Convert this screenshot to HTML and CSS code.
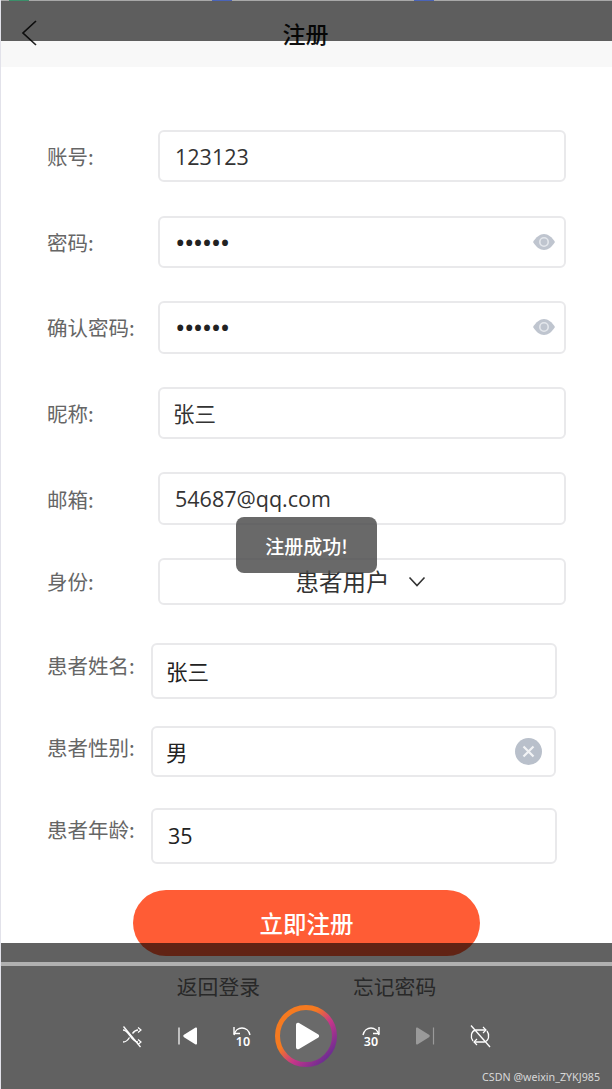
FILE: index.html
```html
<!DOCTYPE html>
<html lang="zh">
<head>
<meta charset="utf-8">
<title>注册</title>
<link rel="stylesheet" href="styles.css">
</head>
<body>
<div class="page">
  <header class="header">
    <svg class="back" width="16" height="26" viewBox="0 0 16 26"><path d="M15 1 2 13l13 12" fill="none" stroke="#222" stroke-width="1.7"/></svg>
    <h1 class="title">注册</h1>
  </header>
  <main class="form">
    <div class="row"><span class="label">账号:</span><div class="field">123123</div></div>
    <div class="row"><span class="label">密码:</span><div class="field"><span class="dots">••••••</span>
      <svg class="eye" width="24" height="18" viewBox="0 0 24 18"><path d="M1 9C4 4 8 1 12 1s8 3 11 8c-3 5-7 8-11 8S4 14 1 9z" fill="#bfc5cf"/><circle cx="12" cy="9" r="4.2" fill="none" stroke="#e4e7ec" stroke-width="1.6"/></svg></div></div>
    <div class="row"><span class="label">确认密码:</span><div class="field"><span class="dots">••••••</span>
      <svg class="eye" width="24" height="18" viewBox="0 0 24 18"><path d="M1 9C4 4 8 1 12 1s8 3 11 8c-3 5-7 8-11 8S4 14 1 9z" fill="#bfc5cf"/><circle cx="12" cy="9" r="4.2" fill="none" stroke="#e4e7ec" stroke-width="1.6"/></svg></div></div>
    <div class="row"><span class="label">昵称:</span><div class="field"><span class="cjk">张三</span></div></div>
    <div class="row"><span class="label">邮箱:</span><div class="field">54687@qq.com</div></div>
    <div class="row row-select"><span class="label">身份:</span><div class="field select"><span>患者用户</span>
      <svg class="chev" width="18" height="12" viewBox="0 0 18 12"><path d="M1.500 1.500 9 9.500l7.500-8" fill="none" stroke="#333" stroke-width="1.600"/></svg></div></div>
    <div class="row row-patient row-name"><span class="label">患者姓名:</span><div class="field"><span class="cjk">张三</span></div></div>
    <div class="row row-patient row-gender"><span class="label">患者性别:</span><div class="field field-gender"><span class="cjk">男</span>
      <svg class="clear" width="27" height="27" viewBox="0 0 27 27"><circle cx="13.500" cy="13.500" r="13.500" fill="#b9c0cb"/><path d="m8.500 8.500 10 10m0-10-10 10" stroke="#f2f3f5" stroke-width="2.200"/></svg></div></div>
    <div class="row row-patient row-age"><span class="label">患者年龄:</span><div class="field">35</div></div>
    <button class="submit">立即注册</button>
    <nav class="links"><span>返回登录</span><span>忘记密码</span></nav>
  </main>

  <div class="toast">注册成功!</div>

  <div class="shade-top">
    <i class="tab tab-g"></i><i class="tab tab-b1"></i><i class="tab tab-b2"></i>
  </div>

  <div class="shade-bottom">
    <div class="progress"></div>
    <div class="player">
      <svg class="ico" width="24" height="24" viewBox="0 0 24 24" fill="none" stroke="#fff" stroke-width="1.300"><path d="M3 6c6 0 8 12 15 12M3 18c3 0 5-2 6.500-4.500M12.500 9.500C14 7.500 16 6 18 6"/><path d="m18 3.500 3 2.500-3 2.500M18 15.500l3 2.500-3 2.500" stroke-width="1.200"/><path d="M3.500 2.500 20.500 23"/></svg>
      <svg class="ico" width="22" height="24" viewBox="0 0 22 24"><path d="M2 3.500v17" stroke="#fff" stroke-width="1.200"/><path d="M20 4.500c0-1-1-1.300-1.800-.8L7 10.800c-1 .6-1 1.800 0 2.400l11.200 7.100c.8.500 1.800.2 1.800-.8z" fill="#fff"/></svg>
      <svg class="ico" width="22" height="28" viewBox="0 -2 22 28"><path d="M3 11C4 6.500 7.500 4 11 4s7 2.500 8 7" fill="none" stroke="#fff" stroke-width="1.400"/><path d="M3 3v6.500h6" fill="none" stroke="#fff" stroke-width="1.400"/><text x="12" y="22" class="skip">10</text></svg>
      <svg class="play" width="62" height="62" viewBox="0 0 62 62">
        <defs><linearGradient id="ring" x1="0.150" y1="0.150" x2="0.900" y2="0.850"><stop offset="0.300" stop-color="#f57a20"/><stop offset="0.620" stop-color="#c5368a"/><stop offset="1" stop-color="#6f2d92"/></linearGradient></defs>
        <circle cx="31" cy="31" r="28.500" fill="#6a6a6a" stroke="url(#ring)" stroke-width="5"/>
        <path d="M21 20c0-2 1.500-2.800 3-2l19 11.200c1.500.9 1.500 2.700 0 3.600L24 44c-1.500.8-3 0-3-2z" fill="#fff"/>
      </svg>
      <svg class="ico" width="22" height="28" viewBox="0 -2 22 28"><path d="M3 11C4 6.500 7.500 4 11 4s7 2.500 8 7" fill="none" stroke="#fff" stroke-width="1.400"/><path d="M19 3v6.500h-6" fill="none" stroke="#fff" stroke-width="1.400"/><text x="11" y="22" class="skip">30</text></svg>
      <svg class="ico" width="22" height="24" viewBox="0 0 22 24"><path d="M20.500 3.500v17" stroke="#9a9a9a" stroke-width="1.200"/><path d="M3 4.500c0-1 1-1.300 1.800-.8L16 10.800c1 .6 1 1.800 0 2.400L4.800 20.300c-.8.500-1.800.2-1.800-.8z" fill="#9a9a9a"/></svg>
      <svg class="ico" width="24" height="24" viewBox="0 0 24 24" fill="none" stroke="#fff" stroke-width="1.300"><path d="M5 17C2 13 3 7 8 6h10M19 7c3 4 2 10-3 11H6"/><path d="m15 3 3 3-3 3M9 15l-3 3 3 3" stroke-width="1.200"/><path d="M3 1.500 22 23"/></svg>
    </div>
    <div class="mark">CSDN @weixin_ZYKJ985</div>
  </div>
</div>
</body>
</html>
```
FILE: styles.css
```css
* { box-sizing: border-box; }
html, body { margin: 0; padding: 0; }
body { font-family: "Noto Sans CJK SC", "Noto Sans", sans-serif; background: #fff; }
.page { position: relative; width: 612px; height: 1089px; overflow: hidden; background: #fff; border-left: 1px solid #e2e2ea; }

.header { height: 67px; background: #f8f8f8; display: flex; justify-content: center; padding-top: 18px; position: relative; }
.back { position: absolute; left: 20px; top: 20px; }
.title { margin: 0; font-size: 23px; line-height: 30px; font-weight: 500; color: #111; position: relative; left: -1px; }

.form { padding: 63px 46px 0 46px; }
.row { display: flex; align-items: center; height: 52.400px; margin-bottom: 33.200px; }
.label { width: 111px; flex: none; font-size: 20.500px; color: #666; }
.field { flex: none; width: 408px; height: 100%; border: 2px solid #e9e9eb; border-radius: 6px; display: flex; align-items: center; padding-left: 15px; font: 21.500px "Open Sans", "Noto Sans CJK SC", sans-serif; color: #333; position: relative; background: #fff; }
.dots { font-size: 28px; line-height: 30px; letter-spacing: -1.600px; color: #222; }
.cjk { margin-left: -2px; font-size: 21.500px; }
.eye { position: absolute; right: 8px; top: 15px; }

.row-select { height: 47px; margin-bottom: 38px; }
.select { justify-content: center; gap: 18px; padding: 0 3px 0 0; font: 23.500px "Noto Sans CJK SC", sans-serif; }
.chev { margin-top: 2px; }

.row-patient { align-items: flex-start; }
.row-patient .label { width: 104px; padding-top: 4px; line-height: 30px; }
.row-patient .field { width: 406px; color: #222; }
.row-name { height: 56px; margin-bottom: 27px; }
.row-gender { height: 51px; margin-bottom: 31px; }
.row-age { height: 56px; margin-bottom: 26px; }
.field-gender { width: 405px !important; font-family: "Noto Sans CJK SC", sans-serif; }
.clear { position: absolute; right: 12px; top: 10px; }
.row-age .label { padding-top: 6px; }
.row-name .label { padding-top: 7px; }
.row-gender .label { padding-top: 6px; }

.submit { display: block; width: 347px; height: 66.500px; margin: 0 0 0 86px; border: 0; border-radius: 33px; background: #ff5c35; color: #fff; font: 500 23.500px "Noto Sans CJK SC", sans-serif; padding: 0; }
.links { display: flex; justify-content: center; gap: 93px; margin-top: 14px; font-size: 20.800px; line-height: 32px; color: #6a6a6a; }

.toast { position: absolute; left: 235px; top: 517px; width: 141px; height: 56px; border-radius: 8px; background: rgba(72,72,72,.82); color: #fff; font-size: 19px; font-weight: 500; display: flex; align-items: center; justify-content: center; padding-top: 1px; }

.shade-top { position: absolute; left: -1px; top: 0; width: 612px; height: 41px; background: rgba(0,0,0,.62); border-top: 1px solid #a8a8a8; }
.tab { position: absolute; top: -1px; height: 1px; width: 20px; }
.tab-g { left: 9px; background: #3b8f6a; }
.tab-b1 { left: 212px; background: #4a64b8; }
.tab-b2 { left: 414px; background: #4a64b8; }

.shade-bottom { position: absolute; left: -1px; top: 943px; width: 612px; height: 146px; background: linear-gradient(rgba(0,0,0,.62) 19px, rgba(0,0,0,.31) 19px, rgba(0,0,0,.31) 23px, rgba(0,0,0,.62) 23px); }
.progress { height: 23px; }
.player { display: flex; align-items: center; height: 62px; margin-top: 39px; padding-left: 120px; }
.ico { flex: none; display: block; }
.ico:nth-child(1) { margin-right: 32.500px; }
.ico:nth-child(2) { margin-right: 32.500px; }
.ico:nth-child(3) { margin-right: 22px; }
.play { flex: none; margin-right: 23px; }
.ico:nth-child(5) { margin-right: 31px; }
.ico:nth-child(6) { margin-right: 33px; }
.skip { font: 600 12.500px "Noto Sans", sans-serif; fill: #fff; text-anchor: middle; }
.mark { position: absolute; right: 12px; bottom: 5px; font: 10.700px/14px "Noto Sans", sans-serif; color: #d8d8d8; }
```
